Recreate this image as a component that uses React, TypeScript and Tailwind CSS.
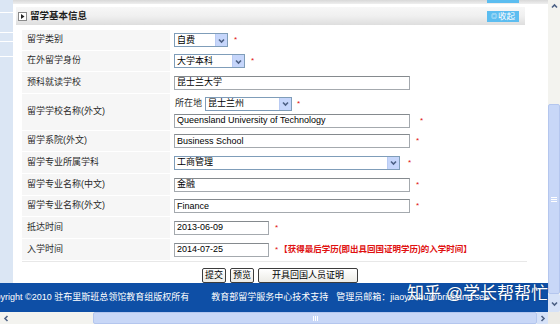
import type { ReactNode } from 'react';

function Chevron({ dir = 'down' }: { dir?: 'down' | 'up' | 'left' | 'right' }) {
  const d = {
    down: 'M2 3.5 L4.5 6 L7 3.5',
    up: 'M2 5.5 L4.5 3 L7 5.5',
    left: 'M5.5 2 L3 4.5 L5.5 7',
    right: 'M3.5 2 L6 4.5 L3.5 7',
  }[dir];
  return (
    <svg width="9" height="9" viewBox="0 0 9 9">
      <path d={d} fill="none" stroke="#4d6185" strokeWidth="1.6" />
    </svg>
  );
}

function Select({ value, className }: { value: string; className: string }) {
  return (
    <div className={`flex h-[14px] items-center border border-[#7f9db9] bg-white ${className}`}>
      <span className="flex-1 pl-[2px] leading-none">{value}</span>
      <span className="flex h-full w-[12px] items-center justify-center border-l border-[#b9cbf3] bg-[#c6d6fb]">
        <Chevron />
      </span>
    </div>
  );
}

function Input({ value, className = 'w-[236px]' }: { value: string; className?: string }) {
  return (
    <div className={`flex h-[14px] items-center border border-[#a4a9ae] border-t-[#858a8e] bg-white pl-[2px] leading-none ${className}`}>
      {value}
    </div>
  );
}

function Star({ className = 'ml-[6px]' }: { className?: string }) {
  return <span className={`text-[8px] leading-none text-[#e01010] ${className}`}>*</span>;
}

function Row({ label, h, children }: { label: string; h: string; children: ReactNode }) {
  return (
    <div className={`flex border-b border-white ${h}`}>
      <div className="flex w-[148px] items-center bg-[#f6f6f6] pl-[5px] text-[#2a2a2a]">{label}</div>
      <div className="flex flex-1 items-center pl-[4px]">{children}</div>
    </div>
  );
}

function Btn({ children, className = '' }: { children: ReactNode; className?: string }) {
  return (
    <div className={`flex h-[15px] items-center justify-center whitespace-nowrap rounded-[2px] border border-[#3c3c3c] bg-gradient-to-b from-white to-[#ecebe6] leading-none ${className}`}>
      {children}
    </div>
  );
}

export default function App() {
  return (
    <div className="relative flex h-[324px] w-[560px] flex-col overflow-hidden bg-white font-['Liberation_Sans','Noto_Sans_CJK_SC',sans-serif] text-[9px] text-black">
      <div className="flex h-[312px]">
        <div className="flex w-[548px] flex-col">
          <div className="flex h-[283px]">
            {/* left nav strip */}
            <div className="flex w-[13px] flex-col bg-[#dbe6f4]">
              <div className="h-[13px] border-b border-white" />
              <div className="h-[20px] border-b border-white" />
              <div className="h-[9px] border-b border-white" />
              <div className="h-[15px] border-b border-white" />
            </div>

            <div className="flex flex-1 flex-col bg-white">
              {/* bottom of previous section */}
              <div className="flex h-[4px] bg-gradient-to-b from-[#d8d8d8] to-[#efefef] pr-[29px]">
                <div className="ml-auto h-[3px] w-[32px] bg-[#5cbdf0]" />
              </div>

              {/* section header */}
              <div className="mt-[3px] ml-[3px] mr-[23px] flex h-[18px] items-center bg-gradient-to-b from-[#f7f7f7] via-[#f0f0f0] to-[#dedede] pl-[2px] pr-[6px]">
                <div className="flex h-[9px] w-[9px] items-center justify-center border border-[#8a8a8a] bg-white">
                  <svg width="5" height="5" viewBox="0 0 5 5">
                    <path d="M1 0 L4.5 2.5 L1 5 Z" fill="#222" />
                  </svg>
                </div>
                <span className="ml-[3px] text-[9.5px] font-bold text-[#1e1e1e]">留学基本信息</span>
                <div className="ml-auto flex h-[11px] w-[32px] items-center justify-center gap-[1px] bg-[#5cbdf0] text-[8.5px] leading-none text-white">
                  <span className="text-[6px]">◎</span>收起
                </div>
              </div>

              {/* form */}
              <div className="ml-[9px] mr-[21px] mt-[5px] flex flex-col border-b border-[#e8e8e8]">
                <Row label="留学类别" h="h-[21px]">
                  <Select value="自费" className="w-[54px]" />
                  <Star />
                </Row>
                <Row label="在外留学身份" h="h-[21px]">
                  <Select value="大学本科" className="w-[71px]" />
                  <Star />
                </Row>
                <Row label="预科就读学校" h="h-[22px]">
                  <Input value="昆士兰大学" />
                </Row>
                <div className="flex h-[37px] border-b border-white">
                  <div className="flex w-[148px] items-center bg-[#f6f6f6] pl-[5px] text-[#2a2a2a]">留学学校名称(外文)</div>
                  <div className="flex flex-1 flex-col justify-center gap-[3px] pl-[4px]">
                    <div className="flex items-center">
                      <span className="w-[31px] pl-[1px] text-[#2a2a2a]">所在地</span>
                      <Select value="昆士兰州" className="w-[87px]" />
                      <Star className="ml-[5px]" />
                    </div>
                    <div className="flex items-center">
                      <Input value="Queensland University of Technology" />
                      <Star className="ml-[10px]" />
                    </div>
                  </div>
                </div>
                <Row label="留学系院(外文)" h="h-[21px]">
                  <Input value="Business School" />
                  <Star />
                </Row>
                <Row label="留学专业所属学科" h="h-[22px]">
                  <Select value="工商管理" className="w-[226px]" />
                  <Star className="ml-[8px]" />
                </Row>
                <Row label="留学专业名称(中文)" h="h-[22px]">
                  <Input value="金融" />
                  <Star />
                </Row>
                <Row label="留学专业名称(外文)" h="h-[21px]">
                  <Input value="Finance" />
                  <Star />
                </Row>
                <Row label="抵达时间" h="h-[22px]">
                  <Input value="2013-06-09" className="w-[95px]" />
                  <Star />
                </Row>
                <Row label="入学时间" h="h-[22px]">
                  <Input value="2014-07-25" className="w-[95px]" />
                  <Star />
                  <span className="ml-[1px] text-[8.5px] font-bold text-[#e01010]">【获得最后学历(即出具回国证明学历)的入学时间】</span>
                </Row>
              </div>

              {/* buttons */}
              <div className="mt-[6px] flex justify-center gap-[4px] pr-[1px]">
                <Btn className="w-[24px]">提交</Btn>
                <Btn className="w-[24px]">预览</Btn>
                <Btn className="w-[100px]">开具回国人员证明</Btn>
              </div>
            </div>
          </div>

          {/* footer */}
          <div className="flex h-[29px] items-center overflow-hidden whitespace-nowrap bg-[#0e4fa6] text-white">
            <span className="-ml-[16px]">Copyright ©2010 驻布里斯班总领馆教育组版权所有</span>
            <span className="ml-[22px]">教育部留学服务中心技术支持</span>
            <span className="ml-[8px]">管理员邮箱：jiaoyuchu@brisbane.sea</span>
          </div>
        </div>

        {/* vertical scrollbar */}
        <div className="flex w-[12px] flex-col bg-[#f3f3ef]">
          <div className="flex h-[12px] items-center justify-center">
            <Chevron dir="up" />
          </div>
          <div className="h-[92px]" />
          <div className="flex h-[190px] items-center justify-center rounded-[2px] border border-[#b4c6ee] bg-[#c8d7f7]">
            <div className="flex w-[6px] flex-col gap-[1px]">
              <div className="h-px bg-white" />
              <div className="h-px bg-white" />
              <div className="h-px bg-white" />
            </div>
          </div>
          <div className="flex flex-1 items-center justify-center rounded-[2px] bg-[#d6e2f8]">
            <Chevron dir="down" />
          </div>
        </div>
      </div>

      {/* horizontal scrollbar */}
      <div className="flex h-[12px] bg-[#f3f3ef]">
        <div className="flex w-[12px] items-center justify-center">
          <Chevron dir="left" />
        </div>
        <div className="w-[81px]" />
        <div className="flex w-[444px] items-center justify-center rounded-[2px] border border-[#b4c6ee] bg-[#c8d7f7]">
          <div className="flex h-[5px] gap-[1px]">
            <div className="w-px bg-white" />
            <div className="w-px bg-white" />
            <div className="w-px bg-white" />
          </div>
        </div>
        <div className="flex w-[11px] items-center justify-center bg-[#d6e2f8]">
          <Chevron dir="right" />
        </div>
        <div className="flex-1 bg-[#ecebe6]" />
      </div>

      {/* watermark */}
      <div className="pointer-events-none absolute left-[407px] top-[285px] whitespace-nowrap text-[17px] leading-none text-white [text-shadow:0_0_2px_rgba(0,0,0,0.35)]">
        知乎 @学长帮帮忙
      </div>
    </div>
  );
}
